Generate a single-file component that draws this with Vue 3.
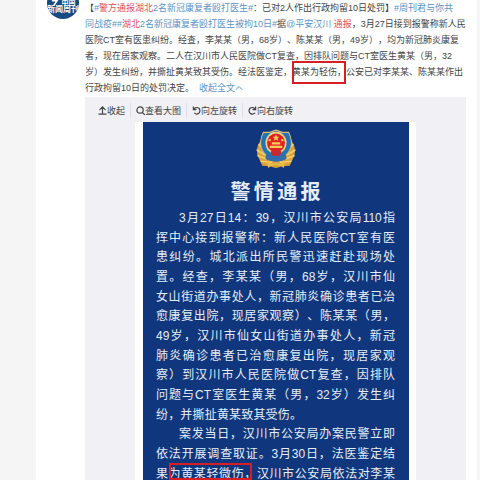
<script setup>
const post = [
  [['', '【'], ['a', '#'], ['hit', '警方通报湖北'], ['a', '2名新冠康复者殴打医生#'], ['', '：已对2人作出行政拘留10日处罚】'], ['a', '#周刊君与你共']],
  [['a', '同战疫##'], ['hit', '湖北'], ['a', '2名新冠康复者殴打医生被拘10日#'], ['', '据'], ['a', '@平安汉川'], ['', ' '], ['hit', '通报'], ['', '，3月27日接到报警称新人民']],
  [['', '医院CT室有医患纠纷。经查，李某某（男，68岁）、陈某某（男，49岁），均为新冠肺炎康复']],
  [['', '者，现在居家观察。二人在汉川市人民医院做CT复查，因排队问题与CT室医生黄某（男，32']],
  [['', '岁）发生纠纷，并撕扯黄某致其受伤。经法医鉴定，'], ['mark', '黄某为轻伤，'], ['', '公安已对李某某、陈某某作出']],
  [['', '行政拘留10日的处罚决定。  '], ['a', '收起全文']]
]

const tools = [
  { label: '收起', d: 'M1 9h8M5 8V1M2 4l3-3 3 3' },
  { label: '查看大图', d: 'M8 4.5a3.5 3.5 0 1 1-7 0a3.5 3.5 0 0 1 7 0M7 7l2.5 2.5' },
  { label: '向左旋转', d: 'M1.5 1v3h3M1.5 4C3 1.5 6 1 7.700 2.500C9.500 4.200 9 7.500 7 8.500C5.500 9.200 4 9 3 8' },
  { label: '向右旋转', d: 'M8.500 1v3h-3M8.500 4C7 1.500 4 1 2.300 2.500C.5 4.200 1 7.500 3 8.500C4.500 9.200 6.500 9 7.500 8' }
]

const notice = [
  { text: '3月27日14：39，汉川市公安局110指', indent: true },
  { text: '挥中心接到报警称：新人民医院CT室有医' },
  { text: '患纠纷。城北派出所民警迅速赶赴现场处' },
  { text: '置。经查，李某某（男，68岁，汉川市仙' },
  { text: '女山街道办事处人，新冠肺炎确诊患者已治' },
  { text: '愈康复出院，现居家观察）、陈某某（男，' },
  { text: '49岁，汉川市仙女山街道办事处人，新冠' },
  { text: '肺炎确诊患者已治愈康复出院，现居家观' },
  { text: '察）到汉川市人民医院做CT复查，因排队' },
  { text: '问题与CT室医生黄某（男，32岁）发生纠' },
  { text: '纷，并撕扯黄某致其受伤。', end: true },
  { text: '案发当日，汉川市公安局办案民警立即', indent: true },
  { text: '依法开展调查取证。3月30日，法医鉴定结' },
  { text: '果', mark: '为黄某轻微伤，', rest: '汉川市公安局依法对李某' }
]
</script>

<template>
  <div class="page">
    <main class="card">
      <div class="avatar">
        <div class="top"><svg viewBox="0 0 10 8"><path d="M1 1H7L3 7" /></svg>中国</div>
        <span>新闻周刊</span>
      </div>
      <article class="content">
        <div class="post">
          <p v-for="(line, i) in post" :key="i"><template v-for="(part, j) in line" :key="j"><a v-if="part[0] === 'a' || part[0] === 'hit'" href="#" :class="part[0]">{{ part[1] }}</a><span v-else :class="part[0]">{{ part[1] }}</span></template><svg v-if="i === 5" class="chevron" viewBox="0 0 8 8"><path d="M1 5.500L4 2.500L7 5.500" /></svg></p>
        </div>
        <section class="viewer">
          <div class="toolbar">
            <button v-for="tool in tools" :key="tool.label" type="button">
              <svg viewBox="0 0 10 10"><path :d="tool.d" /></svg>{{ tool.label }}
            </button>
          </div>
          <div class="frame">
            <div class="notice">
              <svg class="badge" viewBox="0 0 38 36" preserveAspectRatio="none">
                <path d="M5 10C0 15 0 22 3 27L6 33Q13 33 19 35Q25 33 32 33L35 27C38 22 38 15 33 10Z" fill="#d9a23a" />
                <path d="M3 14l5 5M1 19l7 4M2 24l8 3M5 29l9 1M35 14l-5 5M37 19l-7 4M36 24l-8 3M33 29l-9 1M12 34l3-5M26 34l-3-5" stroke="#f2d06e" stroke-width="1.500" />
                <path d="M19 1L25 3L31 3Q35 11 33 17Q30 25 19 29Q8 25 5 17Q3 11 7 3L13 3Z" fill="#2475b8" stroke="#d8bd70" />
                <path d="M10 22q9 7 18 0l1 5q-10 5-20 0z" fill="#346cad" />
                <circle cx="19" cy="12.500" r="10" fill="#f2d481" />
                <circle cx="19" cy="12.500" r="8.500" fill="#df2025" />
                <path d="M19 5l1 2h2l-1.500 1.500.5 2-2-1-2 1 .5-2L16 7h2zM13 15h12v2H13zM15 12h8v2h-8zM12 9h2v2h-2zM24 9h2v2h-2z" fill="#f6cc57" />
                <path d="M14 20q5-3 10 0l-1 4h-8z" fill="#c9282d" />
                <path d="M9 29q10 4 20 0l-3 5q-7-3-14 0z" fill="#e9b94a" />
              </svg>
              <h1>警情通报</h1>
              <div class="body">
                <p v-for="(line, i) in notice" :key="i" :class="{ indent: line.indent, end: line.end }">{{ line.text }}<span v-if="line.mark" class="mark">{{ line.mark }}</span>{{ line.rest }}</p>
              </div>
            </div>
          </div>
        </section>
      </article>
    </main>
  </div>
</template>

<style>
body {
  margin: 0;
  background: #f5f5f6;
}
</style>

<style scoped>
.page {
  height: 100vh;
  overflow: hidden;
  padding: 0 3px 0 36px;
  box-sizing: border-box;
  font-family: "Liberation Sans", "Noto Sans CJK SC", sans-serif;
  font-size: 9px;
  text-spacing-trim: space-all;
  color: #444;
}
.card {
  display: flex;
  gap: 6px;
  min-height: 100%;
  padding: 0 11px;
  background: #fff;
}
.avatar {
  display: flex;
  flex: none;
  flex-direction: column;
  justify-content: flex-end;
  align-items: center;
  box-sizing: border-box;
  width: 32px;
  height: 32px;
  margin-top: -13px;
  padding-bottom: 5px;
  overflow: hidden;
  border-radius: 50%;
  background: #164a80;
  color: #fff;
  font-size: 8px;
  font-weight: bold;
  line-height: 8px;
  white-space: nowrap;
}
.avatar .top {
  display: flex;
  gap: 2px;
  font-size: 7px;
  line-height: 6px;
}
.avatar svg {
  width: 9px;
  height: 6px;
}
.avatar path {
  fill: none;
  stroke: #fff;
  stroke-width: 2;
}
.content {
  flex: 1;
  min-width: 0;
}
p, h1 {
  margin: 0;
}
.post {
  padding-bottom: 1px;
  line-height: 16px;
  white-space: pre;
}
a {
  text-decoration: none;
}
.a {
  color: #5b93c9;
}
.hit {
  color: #e2525a;
}
.mark {
  position: relative;
}
.mark::after {
  content: "";
  position: absolute;
  inset: -6px 0 -7px;
  border: 2px solid #d81e25;
}
.chevron {
  width: 8px;
  height: 8px;
  vertical-align: -1px;
}
svg path {
  stroke-linecap: round;
}
.chevron path, .toolbar path {
  fill: none;
  stroke: #5b93c9;
}
.toolbar path {
  stroke: #444;
  stroke-width: 1.3;
}
.viewer {
  padding: 0 50px;
  background: #f0f0f5;
}
.toolbar {
  display: flex;
  align-items: center;
  height: 25px;
  margin: 0 -37px;
}
.toolbar button {
  display: flex;
  align-items: center;
  padding: 2px 5px 0 0;
  border: 0;
  background: none;
  color: #444;
  font: inherit;
  line-height: 12px;
}
.toolbar button + button {
  padding-left: 5px;
  border-left: 1px solid #dedee5;
}
.toolbar svg {
  width: 9px;
  height: 9px;
}
.frame {
  padding: 0 7px 0 8px;
  background: #fff;
}
.notice {
  display: flex;
  flex-direction: column;
  align-items: center;
  padding: 7px 14px 20px 13px;
  background: #10377d;
  color: #e4edf8;
}
.badge {
  width: 40px;
  height: 40px;
}
h1 {
  width: 90px;
  margin: 9px 0 2px;
  font-size: 20px;
  line-height: 28px;
  text-align-last: justify;
}
.body {
  align-self: stretch;
  font-size: 12px;
}
.body p {
  line-height: 20px;
  text-align: justify;
  text-align-last: justify;
  white-space: nowrap;
}
.body p:nth-child(3n) {
  line-height: 19px;
}
.body .indent {
  padding-left: 23px;
}
.body .end {
  width: 146px;
}
.body .mark::after {
  inset: -4px 5px 1px 0;
}
</style>
